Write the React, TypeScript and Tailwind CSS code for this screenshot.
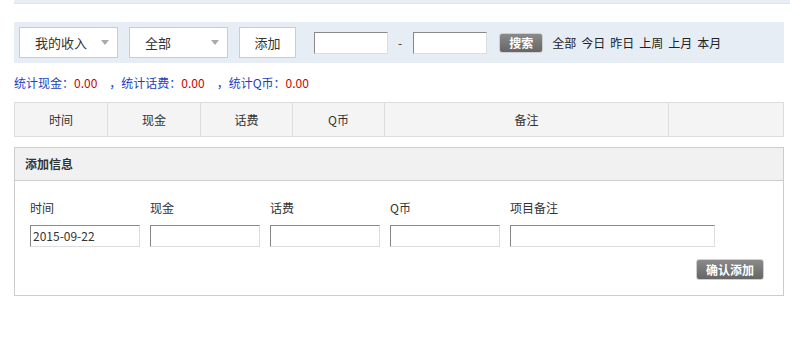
const font = "font-['SimSun','Noto_Sans_CJK_SC',sans-serif]";

function Select({ label }: { label: string }) {
  return (
    <div className="flex h-[31px] w-[99px] items-center justify-between border border-[#cccccc] bg-white pl-[15px] pr-[8px] text-[13px] text-[#333]">
      <span>{label}</span>
      <span className="h-0 w-0 border-x-[4px] border-t-[5px] border-x-transparent border-t-[#aaaaaa]" />
    </div>
  );
}

function TextInput({ w, value }: { w: string; value?: string }) {
  return (
    <div
      className={`${w} flex h-[22px] items-center border border-[#dddddd] border-l-[#888888] border-t-[#888888] bg-white px-[2px] text-[12px] text-[#333]`}
    >
      {value}
    </div>
  );
}

function GrayButton({ children, w, h }: { children: string; w: string; h: string }) {
  return (
    <button
      className={`${w} ${h} flex items-center justify-center rounded-[3px] border border-[#cfcfcf] bg-gradient-to-b from-[#8a8a8a] to-[#666666] text-[12px] font-bold text-white`}
    >
      {children}
    </button>
  );
}

export default function App() {
  const cols = [
    { t: "时间", w: "w-[93px]" },
    { t: "现金", w: "w-[93px]" },
    { t: "话费", w: "w-[92px]" },
    { t: "Q币", w: "w-[92px]" },
    { t: "备注", w: "w-[284px]" },
    { t: "", w: "flex-1" },
  ];
  const fields = [
    { t: "时间", w: "w-[110px]", v: "2015-09-22" },
    { t: "现金", w: "w-[110px]" },
    { t: "话费", w: "w-[110px]" },
    { t: "Q币", w: "w-[110px]" },
    { t: "项目备注", w: "w-[205px]" },
  ];

  return (
    <div className={`${font} h-[345px] w-[790px] bg-white text-[12px] text-[#333]`}>
      <div className="ml-[14px] h-[4px] border-b border-[#dde3ea] bg-[#e8eef5]" />

      <div className="ml-[14px] w-[770px]">
        <div className="mt-[18px] flex h-[41px] items-center bg-[#e6edf5] pl-[5px]">
          <Select label="我的收入" />
          <div className="ml-[11px]">
            <Select label="全部" />
          </div>
          <div className="ml-[11px] flex h-[31px] w-[57px] items-center justify-center border border-[#cccccc] bg-white text-[13px]">
            添加
          </div>
          <div className="ml-[18px]">
            <TextInput w="w-[74px]" />
          </div>
          <span className="ml-[10px] mr-[11px] text-[12px]">-</span>
          <TextInput w="w-[74px]" />
          <div className="ml-[12px]">
            <GrayButton w="w-[44px]" h="h-[20px]">搜索</GrayButton>
          </div>
          <div className="ml-[9px] flex gap-[5px] text-[12px] text-[#222]">
            <span>全部</span>
            <span>今日</span>
            <span>昨日</span>
            <span>上周</span>
            <span>上月</span>
            <span>本月</span>
          </div>
        </div>

        <div className="mt-[13px] flex h-[14px] items-center text-[12px] text-[#1c3fc2]">
          <span>统计现金：</span>
          <span className="text-[#cc0000]">0.00</span>
          <span className="ml-[12px]">，统计话费：</span>
          <span className="text-[#cc0000]">0.00</span>
          <span className="ml-[12px]">，统计Q币：</span>
          <span className="text-[#cc0000]">0.00</span>
        </div>

        <div className="mt-[12px] flex h-[35px] border border-[#dddddd] bg-[#f4f4f4]">
          {cols.map((c, i) => (
            <div
              key={i}
              className={`${c.w} flex items-center justify-center text-[12px] ${i < cols.length - 1 ? "border-r border-[#dddddd]" : ""}`}
            >
              {c.t}
            </div>
          ))}
        </div>

        <div className="mt-[10px] h-[149px] border border-[#cccccc]">
          <div className="flex h-[33px] items-center border-b border-[#cccccc] bg-[#f1f1f1] pl-[10px] text-[12px] font-bold text-[#333]">
            添加信息
          </div>
          <div className="px-[15px] pt-[20px]">
            <div className="flex gap-[10px]">
              {fields.map((f, i) => (
                <div key={i} className="flex flex-col">
                  <span className="h-[14px] text-[12px] leading-[14px]">{f.t}</span>
                  <div className="mt-[10px]">
                    <TextInput w={f.w} value={f.v} />
                  </div>
                </div>
              ))}
            </div>
            <div className="mt-[12px] flex justify-end pr-[4px]">
              <GrayButton w="w-[68px]" h="h-[21px]">确认添加</GrayButton>
            </div>
          </div>
        </div>
      </div>
    </div>
  );
}
